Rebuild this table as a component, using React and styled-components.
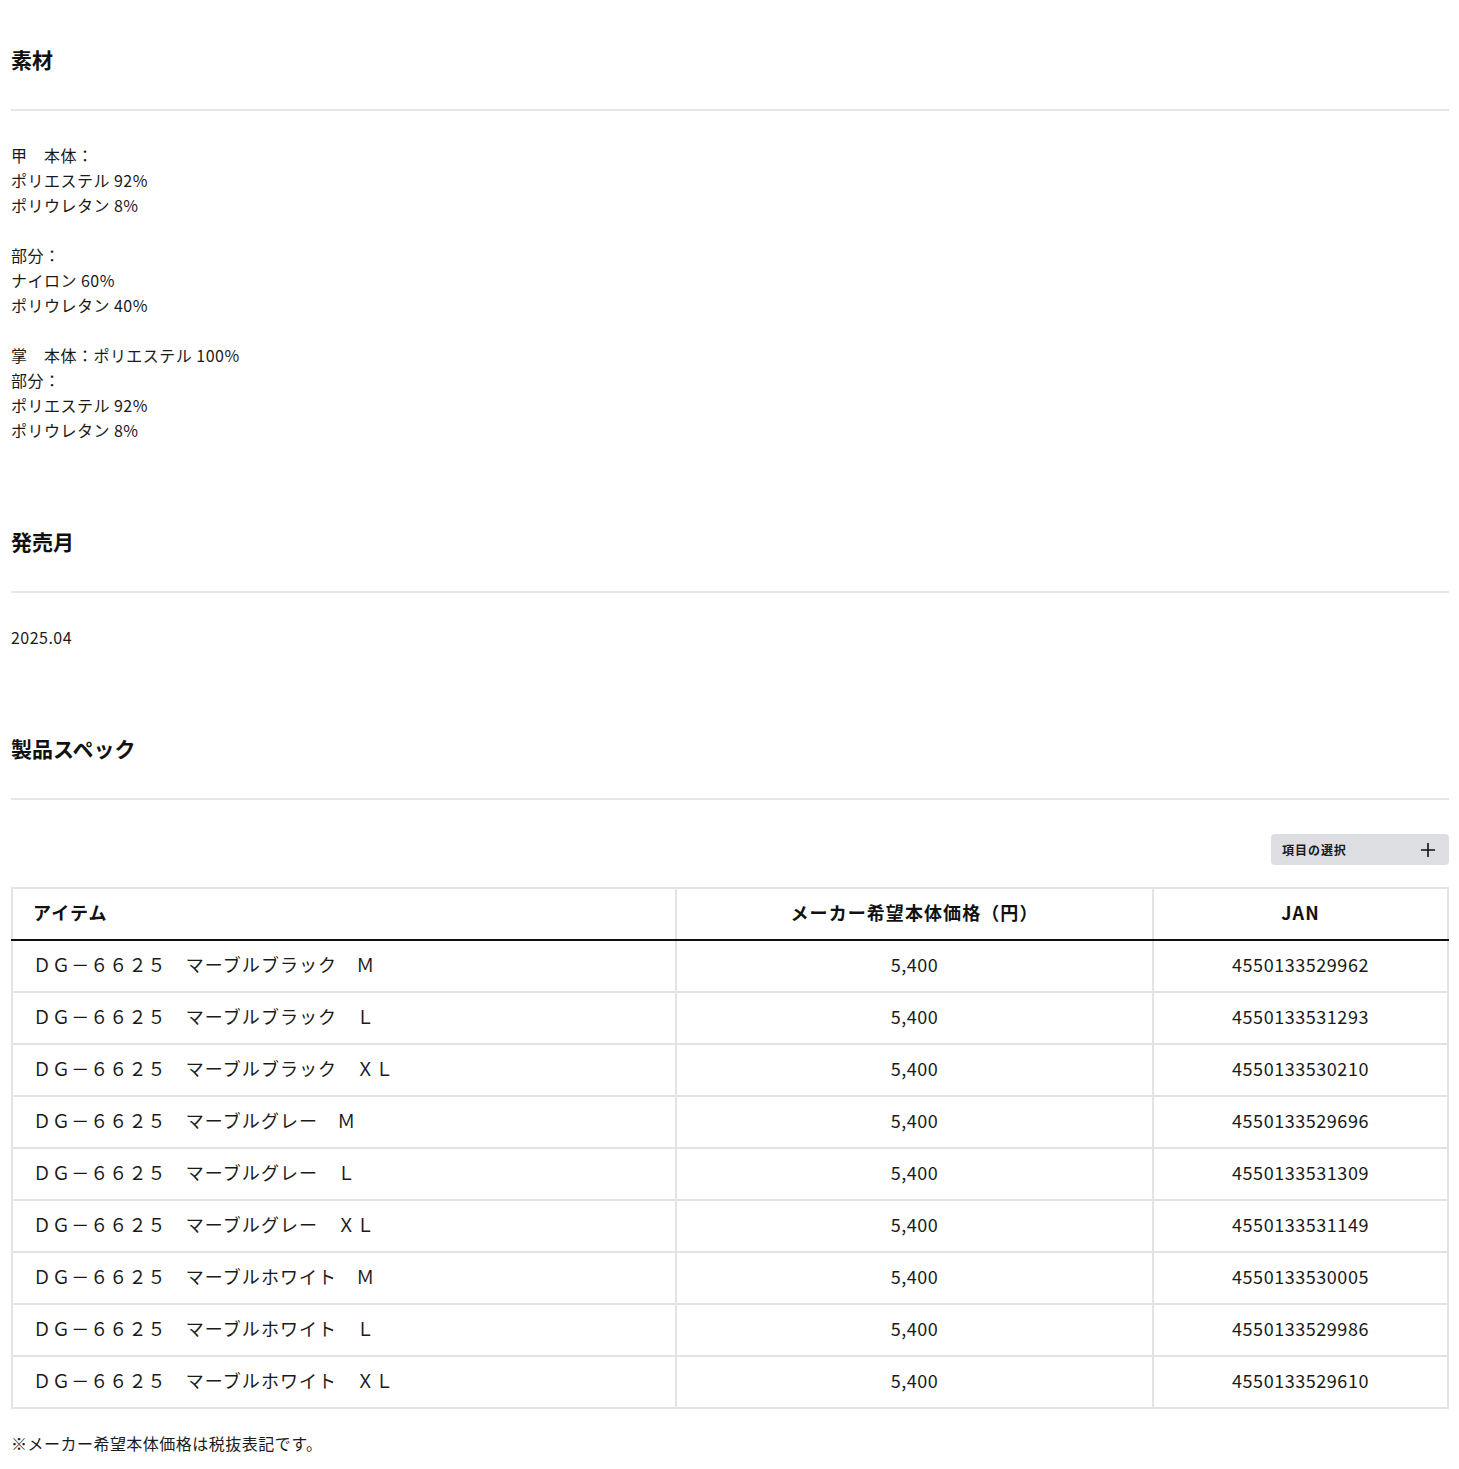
import styled, { createGlobalStyle } from 'styled-components'

const GlobalStyle = createGlobalStyle`
    body {
        margin: 0;
        background: #fff;
        color: #1a1a1a;
        font-family: "Noto Sans CJK JP", "Noto Sans", sans-serif;
        letter-spacing: 0.03em;
    }
`

const Page = styled.div`
    padding: 44px 10px 40px 11px;
`
const Section = styled.section`
    margin-bottom: 83px;
    &:last-child { margin-bottom: 0; }
`
const Heading = styled.h2`
    margin: 0;
    font-size: 21px;
    line-height: 30px;
    font-weight: 700;
    letter-spacing: 0;
    color: #111;
    padding-bottom: 35px;
    border-bottom: 2px solid #e6e6e6;
    margin-bottom: 32px;
`
const Text = styled.div`
    font-size: 16px;
    line-height: 25px;
    white-space: pre-line;
`
const Toolbar = styled.div`
    display: flex;
    justify-content: flex-end;
    margin-top: 34px;
    margin-bottom: 22px;
`
const SelectButton = styled.button`
    width: 178px;
    height: 31px;
    display: flex;
    align-items: center;
    justify-content: space-between;
    padding: 0 13px 0 11px;
    border: none;
    border-radius: 4px;
    background: #dcdee2;
    font-family: inherit;
    font-size: 12px;
    letter-spacing: 0.08em;
    font-weight: 700;
    color: #1a1a1a;
    cursor: pointer;
`
const Table = styled.table`
    width: 100%;
    border-collapse: collapse;
    border: 2px solid #e3e3e3;
    font-size: 18px;
`
const Th = styled.th`
    height: 46px;
    padding: 0 20px 4px;
    font-weight: 700;
    letter-spacing: 0.06em;
    text-align: ${p => p.$align || 'center'};
    border-left: 2px solid #e3e3e3;
    border-bottom: 2px solid #111;
    color: #111;
`
const Td = styled.td`
    height: 46px;
    padding: 0 20px 4px;
    text-align: ${p => p.$align || 'center'};
    letter-spacing: ${p => p.$spaced ? '0.06em' : '0.03em'};
    border: 2px solid #e3e3e3;
    white-space: nowrap;
`
const Note = styled.p`
    margin: 22px 0 0;
    font-size: 16px;
    line-height: 25px;
`

const rows = [
    ['ＤＧ－６６２５　マーブルブラック　Ｍ', '4550133529962'],
    ['ＤＧ－６６２５　マーブルブラック　Ｌ', '4550133531293'],
    ['ＤＧ－６６２５　マーブルブラック　ＸＬ', '4550133530210'],
    ['ＤＧ－６６２５　マーブルグレー　Ｍ', '4550133529696'],
    ['ＤＧ－６６２５　マーブルグレー　Ｌ', '4550133531309'],
    ['ＤＧ－６６２５　マーブルグレー　ＸＬ', '4550133531149'],
    ['ＤＧ－６６２５　マーブルホワイト　Ｍ', '4550133530005'],
    ['ＤＧ－６６２５　マーブルホワイト　Ｌ', '4550133529986'],
    ['ＤＧ－６６２５　マーブルホワイト　ＸＬ', '4550133529610'],
]

const material = `甲　本体：
ポリエステル 92%
ポリウレタン 8%

部分：
ナイロン 60%
ポリウレタン 40%

掌　本体：ポリエステル 100%
部分：
ポリエステル 92%
ポリウレタン 8%`

export default function App() {
    return (
        <Page>
            <GlobalStyle />
            <Section>
                <Heading>素材</Heading>
                <Text>{material}</Text>
            </Section>
            <Section>
                <Heading>発売月</Heading>
                <Text>2025.04</Text>
            </Section>
            <Section>
                <Heading>製品スペック</Heading>
                <Toolbar>
                    <SelectButton>
                        <span>項目の選択</span>
                        <svg width="16" height="16" viewBox="0 0 16 16" fill="none" stroke="#111" strokeWidth="1.6">
                            <path d="M8 1v14M1 8h14" />
                        </svg>
                    </SelectButton>
                </Toolbar>
                <Table>
                    <colgroup>
                        <col style={{ width: 664 }} />
                        <col style={{ width: 477 }} />
                        <col />
                    </colgroup>
                    <thead>
                        <tr>
                            <Th $align="left">アイテム</Th>
                            <Th>メーカー希望本体価格（円）</Th>
                            <Th>JAN</Th>
                        </tr>
                    </thead>
                    <tbody>
                        {rows.map(([name, jan]) => (
                            <tr key={jan}>
                                <Td $align="left" $spaced>{name}</Td>
                                <Td>5,400</Td>
                                <Td>{jan}</Td>
                            </tr>
                        ))}
                    </tbody>
                </Table>
                <Note>※メーカー希望本体価格は税抜表記です。</Note>
            </Section>
        </Page>
    )
}
